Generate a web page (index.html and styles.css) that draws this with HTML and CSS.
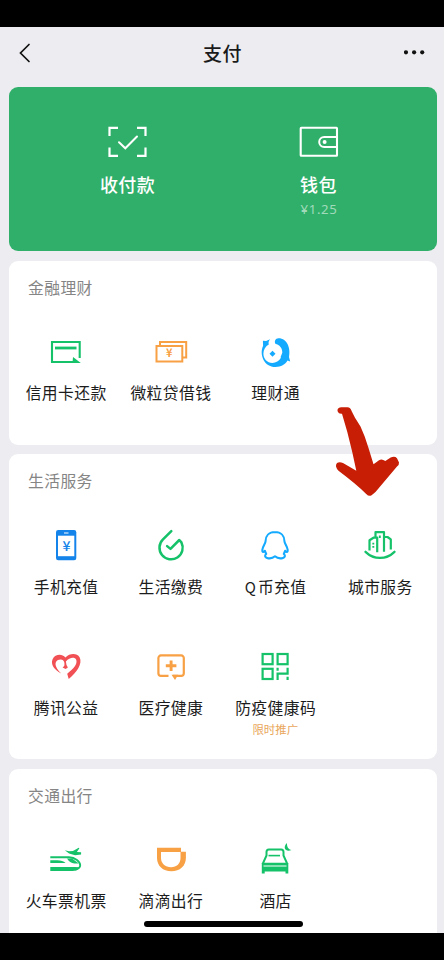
FILE: index.html
```html
<!DOCTYPE html>
<html lang="zh-CN">
<head>
<meta charset="utf-8">
<title>支付</title>
<link rel="stylesheet" href="styles.css">
</head>
<body>
<div class="screen">
  <header class="nav">
    <svg class="nav-back" viewBox="0 0 14 22"><path d="M11 2.500 2.500 11l8.500 8.500"/></svg>
    <h1 class="nav-title">支付</h1>
    <svg class="nav-more" viewBox="0 0 22 6"><circle cx="2" cy="2.300" r="2.100"/><circle cx="10.100" cy="2.300" r="2.100"/><circle cx="18.200" cy="2.300" r="2.100"/></svg>
  </header>
  <main class="content">
    <section class="hero">
      <div class="hero-item">
        <svg class="hero-icon" viewBox="107 122 42 40"><path stroke-width="2.200" d="M109.500 136v-8.200h8.500M137 127.800h8.500v8.200M145.500 147.500v8.300H137M118 155.800h-8.500v-8.300"/><path stroke-width="2" stroke-linecap="round" d="M119 142.300l6.300 6L137 136.500"/></svg>
        <div class="hero-label">收付款</div>
      </div>
      <div class="hero-item">
        <svg class="hero-icon" viewBox="298 122 42 40"><rect x="300.700" y="127.800" width="36.300" height="28" rx=".6" stroke-width="2.100"/><path stroke-width="2" d="M337 137h-12.800a5 5 0 0 0 0 10H337"/><circle cx="324.600" cy="142" r="2" class="solid-white"/></svg>
        <div class="hero-label">钱包</div>
        <div class="hero-sub">¥1.25</div>
      </div>
    </section>

    <section class="card card-finance">
      <h2 class="card-title">金融理财</h2>
      <div class="grid">
        <div class="item">
          <svg class="icon green" viewBox="48 334 36 36"><path stroke-width="2.100" d="M79.700 358v-16H52v20h22"/><path stroke-width="2.800" d="M55 348h21.500"/><path class="fill" d="M73 357l7.800 6H72.500z"/></svg>
          <div class="label">信用卡还款</div>
        </div>
        <div class="item">
          <svg class="icon orange" viewBox="153 334 36 36"><path stroke-width="2" d="M160 346v-4.100h26.200v15.600H183"/><rect x="156.500" y="346" width="25.800" height="15.500" stroke-width="2"/><text class="fill yen" x="169.200" y="357.300" font-size="11">¥</text></svg>
          <div class="label">微粒贷借钱</div>
        </div>
        <div class="item">
          <svg class="icon blue" viewBox="257.500 334 36 36"><path class="fill sky" d="M270.600 339.300l-4 1.700-3.200-.3.200 5C259.500 354.500 264.500 367 276 367c5.500 0 9.700-2.400 12-6.400l2.700 1-1.200-4.600C291.300 349 288 338.300 279 338.300c-3.200 0-4.600 3.400-2.900 5.800 3.800.6 6.900 4.200 6.700 8.600l-1.700 4.300.3.800c-1.800 3.300-4.900 5.200-8.500 5.200-5.300 0-9-4.300-9-9.200 0-4.500 2.200-7.600 5.400-9.400-.6-1.800-.1-3.200 1.300-5.100z"/><path class="fill sky" d="M273 350.700l3 3-3 3-3-3z"/></svg>
          <div class="label">理财通</div>
        </div>
      </div>
    </section>

    <section class="card card-life">
      <h2 class="card-title">生活服务</h2>
      <div class="grid">
        <div class="item">
          <svg class="icon blue" viewBox="48 527 36 36"><rect class="fill" x="56" y="530" width="20.300" height="30.200" rx="2.200"/><path class="paper" d="M58 535.700h16.300v20.500H58z"/><path stroke="#fff" stroke-width="1" d="M64 533h4.500"/><text class="fill yen yen-light" x="66.400" y="551.200" font-size="14">¥</text></svg>
          <div class="label">手机充值</div>
        </div>
        <div class="item">
          <svg class="icon green" viewBox="153.500 527 36 36"><path stroke-width="2.500" stroke-linecap="round" stroke-linejoin="round" d="M171.800 531.100l-8.300 8.300a11.600 11.600 0 1 0 18.400 3l-2.100-2.400-8.800 8.900-3.400-2.800"/></svg>
          <div class="label">生活缴费</div>
        </div>
        <div class="item">
          <svg class="icon blue" viewBox="257.500 527 36 36"><path class="sky-line" stroke-width="2.100" stroke-linejoin="round" d="M275.500 532c-6 0-9.500 4-9.500 9.500 0 2-3 5-3.200 8.500-.2 2.500 1 2.500 2.600.8l1.300 3.200c-1.800 1.200-1.300 3.300.8 3.900 3.200 1 5.800.3 8-1.600 2.200 1.900 4.800 2.600 8 1.600 2.100-.6 2.600-2.700.8-3.900l1.300-3.200c1.600 1.700 2.800 1.700 2.600-.8-.2-3.500-3.200-6.500-3.200-8.500 0-5.500-3.500-9.500-9.500-9.500z"/></svg>
          <div class="label"><span class="latin">Q</span>币充值</div>
        </div>
        <div class="item">
          <svg class="icon green" viewBox="362 527 36 36"><path stroke-width="2.200" stroke-linejoin="round" d="M369.500 550.500v-10.300l4-2.500h3.700v14.500M375.500 537.500v-5.300h8.500v19.600M384 537h3.500l3.300 2.400v10.200"/><path stroke-width="2.300" stroke-linecap="round" d="M365.500 551.800c8.500 8.200 20.500 8.200 29 0"/><path stroke-width="1.900" d="M379.800 535.500v2.400M373.300 542.700v1.800M373.300 546v1.800"/></svg>
          <div class="label">城市服务</div>
        </div>
        <div class="item">
          <svg class="icon red" viewBox="48 647.500 36 36"><path class="fill" d="M61.300 673c-7.500-3.800-11-9.500-8.600-14.500 2.500-5 9.200-5.500 12.700-1.600 4.200-4.300 11.600-4.600 14.200-.1 3.300 6.500-3 15.400-10.900 21.800l-1.500-5.400c6.300-5.100 10.600-9.800 9-14-1.500-3-6.700-2.300-10.300 1.700l.6 3.700 1.400 2.500-2.300 1.500-3-1.500 1.600-1.500c1-3.600-.5-6.500-3.300-6.700-4.200-.2-6.300 3-4.900 6.800 1 2.900 2.700 4.900 5.300 7.300z"/></svg>
          <div class="label">腾讯公益</div>
        </div>
        <div class="item">
          <svg class="icon orange" viewBox="153 647.500 36 36"><path stroke-width="2.200" d="M168.500 675.300H161a2.600 2.600 0 0 1-2.600-2.600v-15.200a2.600 2.600 0 0 1 2.600-2.600h20.200a2.600 2.600 0 0 1 2.600 2.600v15.200a2.600 2.600 0 0 1-2.600 2.600H173"/><path class="fill" d="M171.500 674.300h6.700l-3.200 5.200z"/><path stroke-width="2.900" d="M171.100 660v10.600M165.800 665.300h10.600"/></svg>
          <div class="label">医疗健康</div>
        </div>
        <div class="item">
          <svg class="icon green" viewBox="257.500 647.500 36 36"><g stroke-width="2.200"><rect x="263.100" y="653.500" width="10" height="10.200"/><rect x="278.100" y="653.500" width="10" height="10.200"/><rect x="263.100" y="668.300" width="10" height="10.200"/><path d="M278.100 667.300v3M278.100 679.500v-6.300h10v-5.900M288.100 676.300v3.200"/></g></svg>
          <div class="label">防疫健康码</div>
          <div class="promo">限时推广</div>
        </div>
      </div>
    </section>

    <section class="card card-travel">
      <h2 class="card-title">交通出行</h2>
      <div class="grid">
        <div class="item">
          <svg class="icon green" viewBox="48 842 36 36"><path stroke-width="1.900" d="M50.300 857.300H69c6.300 0 11.200 4.600 11.200 8 0 2.300-2.200 3.800-5 4.500"/><path class="fill" d="M50.300 866.900H75l4.500.3c-1.300 2.300-3.800 3.800-7 3.800H50.300zM50.300 860.300h7c3.700 0 6.300 1 8.300 2.800H50.300zM67 858.500h5l6.800 5h-4.300c-3.200-.3-5.800-2-7.500-5z"/><path class="fill" d="M64.800 850.300l4.200.9 4-.2 5.700-3.200.7.500-2.500 3.700 4.200.3v2.300l-6 .6-6-1.600z"/></svg>
          <div class="label">火车票机票</div>
        </div>
        <div class="item">
          <svg class="icon orange" viewBox="153 842 36 36"><path class="fill" d="M157 847.700h24v4.100h4.900v6.200c0 7.800-6 13.300-14.500 13.300S157 865.800 157 858z"/><path class="paper" d="M161 852h19.500v6c0 5.500-3.800 9.200-9.500 9.200s-10-3.700-10-9.200z"/></svg>
          <div class="label">滴滴出行</div>
        </div>
        <div class="item">
          <svg class="icon green" viewBox="257.500 842 36 36"><path stroke-width="2" stroke-linejoin="round" d="M267 855.500v-3.400c0-1.600.8-2.500 2.300-2.500h12.400c1.500 0 2.300.9 2.300 2.500v3.400l3.700 8.200h-24.400z"/><path stroke-width="1.600" d="M269 855.600h11.500"/><path class="fill" d="M262.300 863h26.500v10.600H286v-2.100h-20.800v2.100h-2.900z"/><path stroke="#fff" stroke-width="1" d="M264 866h23"/><path class="fill" d="M287.500 843c-4.800 4.300-1.300 9.800 4.500 7-3-.6-4.800-3.300-4.500-7z"/></svg>
          <div class="label">酒店</div>
        </div>
      </div>
    </section>
  </main>
  <div class="home-bar"></div>
  <svg class="arrow" viewBox="334 405 68 94"><path d="M337.700 411.500Q336.500 408 341 407.300h6.500q3 .2 4.200 4l3.300 6.500 5.500 8.700 4.200 10 3.800 11.500 5 16.300q2.800-1.900 5.500-4 2.700-2 6.300.8l5.400-3.500q4-1.800 6.300.6l2 4.200q.4 2-2 4l-21.500 25.500q-2 1.600-4.300 3.500-2.400 1.200-5-1.500-9.500-9.500-27.700-23.200-4.200-4.500-1.500-7.700 2.500-1.700 6 0l13.300 7.800-4-18.500-5-20.300-5.300-18.200q-3.400.4-4.300-2.300z"/></svg>
</div>
</body>
</html>
```
FILE: styles.css
```css
* { box-sizing: border-box; }
body {
  margin: 0;
  background: #000;
  font-family: "Noto Sans CJK SC", "Noto Sans", sans-serif;
}
svg { display: block; fill: none; }
h1, h2 { margin: 0; font-weight: 400; }
.screen {
  position: relative;
  width: 444px;
  height: 960px;
  overflow: hidden;
  border-top: 27px solid #000;
  border-bottom: 27px solid #000;
  background: #ededf1;
}
.nav {
  display: flex;
  align-items: center;
  justify-content: space-between;
  height: 60px;
  padding: 0 18px 8px;
}
.nav-back { width: 14px; height: 22px; stroke: #111; stroke-width: 1.7; stroke-linecap: round; }
.nav-title {
  font-size: 19px;
  line-height: 28px;
  font-weight: 500;
  letter-spacing: .6px;
  color: #1a1a1a;
  padding-left: 9px;
}
.nav-more { width: 22px; height: 6px; fill: #111; }
.content {
  display: flex;
  flex-direction: column;
  padding: 0 7px 0 9px;
}
.hero {
  display: grid;
  grid-template-columns: 191px 191px;
  justify-content: center;
  height: 164px;
  padding-top: 35px;
  border-radius: 9px;
  background: #30af6a;
}
.hero-item { display: flex; flex-direction: column; align-items: center; color: #fff; }
.hero-icon { width: 42px; height: 40px; stroke: #fff; }
.solid-white { fill: #fff; stroke: none; }
.hero-label {
  margin-top: 9px;
  font-size: 18px;
  line-height: 26px;
  font-weight: 500;
  letter-spacing: .4px;
}
.hero-sub {
  padding-left: 1px;
  font-family: "Noto Sans", sans-serif;
  font-size: 13.200px;
  line-height: 25px;
  letter-spacing: .7px;
  color: #a0dabb;
}
.card {
  flex: none;
  padding: 15px 4.500px 0;
  border-radius: 9px;
  background: #fff;
}
.card-finance { height: 184.500px; margin-top: 9.500px; }
.card-life { height: 305.500px; margin-top: 8.500px; }
.card-travel { height: 190px; margin-top: 9.500px; }
.card-title {
  padding-left: 14.500px;
  font-size: 15.800px;
  line-height: 24px;
  letter-spacing: .4px;
  color: #858585;
}
.grid {
  display: grid;
  grid-template-columns: repeat(4, 104.750px);
  grid-auto-rows: 121px;
  margin-top: 34.500px;
}
.card-finance .grid, .card-travel .grid { margin-top: 34px; }
.item { display: flex; flex-direction: column; align-items: center; }
.icon { width: 36px; height: 36px; overflow: visible; stroke: currentColor; }
.fill { fill: currentColor; stroke: none; }
.paper { fill: #fff; stroke: none; }
.yen { font-family: "Noto Sans CJK SC", sans-serif; font-weight: 700; text-anchor: middle; }
.yen-light { font-weight: 500; }
.green { color: #15c269; }
.orange { color: #f8a044; }
.blue { color: #1584ea; }
.red { color: #f15055; }
.sky { fill: #13aaff; }
.sky-line { stroke: #13aaff; }
.label {
  margin-top: 11.500px;
  padding-left: .5px;
  font-size: 15.800px;
  line-height: 24px;
  letter-spacing: .4px;
  white-space: nowrap;
  color: #1c1c1c;
}
.latin { font-size: 15px; letter-spacing: 2px; }
.promo {
  margin-top: 1px;
  font-size: 11.500px;
  line-height: 16px;
  color: #e9a75c;
}
.home-bar {
  position: absolute;
  left: 144px;
  bottom: 6.500px;
  width: 159px;
  height: 5.500px;
  border-radius: 3px;
  background: #000;
}
.arrow {
  position: absolute;
  left: 334px;
  top: 378px;
  width: 68px;
  height: 94px;
  fill: #c71e05;
}
```
